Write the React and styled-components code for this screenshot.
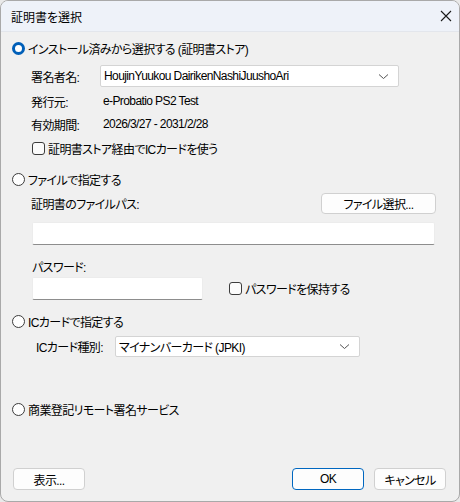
import React from 'react';
// styles
import styled, { createGlobalStyle } from 'styled-components';

const GlobalStyle = createGlobalStyle`
    html, body {
        margin: 0;
        padding: 0;
        background: #e9e9e9;
    }
    * {
        box-sizing: border-box;
    }
`;

const Radio = ({ checked, children }) => (
    <StyledOption>
        <StyledRadio checked={checked} />
        <span>{children}</span>
    </StyledOption>
);

const Check = ({ children }) => (
    <StyledOption>
        <StyledCheckbox />
        <span>{children}</span>
    </StyledOption>
);

const Combo = ({ value, width }) => (
    <StyledCombo style={{ width }}>
        <span>{value}</span>
        <svg width="11" height="7" viewBox="0 0 11 7">
            <path d="M1 1.5 L5.5 5.5 L10 1.5" fill="none" stroke="#555" strokeWidth="1" />
        </svg>
    </StyledCombo>
);

const App = () => {
    return (
        <>
            <GlobalStyle />
            <StyledWindow>
                <StyledTitleBar>
                    <span>証明書を選択</span>
                    <svg width="12" height="12" viewBox="0 0 12 12">
                        <path d="M1 1 L11 11 M11 1 L1 11" stroke="#1a1a1a" strokeWidth="1.1" />
                    </svg>
                </StyledTitleBar>
                <StyledBody>
                    <StyledRow top={8}>
                        <Radio checked>インストール済みから選択する (証明書ストア)</Radio>
                    </StyledRow>
                    <StyledRow top={9} indent={19} height={22}>
                        <StyledLabel width={69}>署名者名:</StyledLabel>
                        <Combo value="HoujinYuukou DairikenNashiJuushoAri" width={299} />
                    </StyledRow>
                    <StyledRow top={6} indent={19}>
                        <StyledLabel width={72}>発行元:</StyledLabel>
                        <span>e-Probatio PS2 Test</span>
                    </StyledRow>
                    <StyledRow top={7} indent={19}>
                        <StyledLabel width={72}>有効期間:</StyledLabel>
                        <span>2026/3/27 - 2031/2/28</span>
                    </StyledRow>
                    <StyledRow top={8} indent={20}>
                        <Check>証明書ストア経由でICカードを使う</Check>
                    </StyledRow>

                    <StyledRow top={15}>
                        <Radio>ファイルで指定する</Radio>
                    </StyledRow>
                    <StyledRow top={6} indent={19} height={21}>
                        <StyledLabel>証明書のファイルパス:</StyledLabel>
                        <StyledButton width={115} push>ファイル選択...</StyledButton>
                    </StyledRow>
                    <StyledRow top={8} indent={20} height={23}>
                        <StyledField width={403} />
                    </StyledRow>
                    <StyledRow top={13} indent={20}>
                        <StyledLabel>パスワード:</StyledLabel>
                    </StyledRow>
                    <StyledRow top={3} indent={20} height={23}>
                        <StyledField width={171} />
                        <StyledGap width={26} />
                        <Check>パスワードを保持する</Check>
                    </StyledRow>

                    <StyledRow top={13}>
                        <Radio>ICカードで指定する</Radio>
                    </StyledRow>
                    <StyledRow top={7} indent={24} height={21}>
                        <StyledLabel width={79}>ICカード種別:</StyledLabel>
                        <Combo value="マイナンバーカード (JPKI)" width={245} />
                    </StyledRow>

                    <StyledRow top={44}>
                        <Radio>商業登記リモート署名サービス</Radio>
                    </StyledRow>

                    <StyledFooter>
                        <StyledButton width={72}>表示...</StyledButton>
                        <StyledFooterRight>
                            <StyledButton width={72} primary>OK</StyledButton>
                            <StyledButton width={72}>キャンセル</StyledButton>
                        </StyledFooterRight>
                    </StyledFooter>
                </StyledBody>
            </StyledWindow>
        </>
    );
}

const StyledWindow = styled.div`
    width: 460px;
    height: 502px;
    display: flex;
    flex-direction: column;
    border: 1px solid #a9a9a9;
    border-radius: 8px;
    overflow: hidden;
    background: #f0f0f0;
    color: #000;
    font-family: "Liberation Sans", "Noto Sans CJK JP", sans-serif;
    font-size: 12px;
    letter-spacing: -0.6px;
    font-feature-settings: "palt";
`;

const StyledTitleBar = styled.div`
    height: 31px;
    flex: none;
    display: flex;
    align-items: center;
    justify-content: space-between;
    padding: 0 7px 0 10px;
    background: #eef2f9;
    border-bottom: 1px solid #e3e6ec;
    letter-spacing: 0;
`;

const StyledBody = styled.div`
    flex: 1;
    display: flex;
    flex-direction: column;
    padding: 0 23px 11px 11px;
`;

const StyledRow = styled.div`
    display: flex;
    align-items: center;
    height: ${props => props.height || 16}px;
    margin-top: ${props => props.top}px;
    padding-left: ${props => props.indent || 0}px;
    white-space: nowrap;
`;

const StyledLabel = styled.span`
    flex: none;
    width: ${props => props.width ? `${props.width}px` : 'auto'};
`;

const StyledGap = styled.span`
    flex: none;
    width: ${props => props.width}px;
`;

const StyledOption = styled.span`
    display: flex;
    align-items: center;
    gap: 3px;
`;

const StyledRadio = styled.span`
    width: 13px;
    height: 13px;
    flex: none;
    border-radius: 50%;
    border: ${props => props.checked ? '3.5px solid #005fb8' : '1px solid #3c3c3c'};
    background: #fff;
`;

const StyledCheckbox = styled.span`
    width: 13px;
    height: 13px;
    flex: none;
    border-radius: 3px;
    border: 1px solid #3c3c3c;
    background: #fbfbfb;
`;

const StyledCombo = styled.div`
    height: 100%;
    display: flex;
    align-items: center;
    justify-content: space-between;
    padding: 0 9px 0 3px;
    background: #fff;
    border: 1px solid #d4d4d4;
    border-radius: 2px;
`;

const StyledField = styled.div`
    height: 100%;
    width: ${props => props.width}px;
    flex: none;
    background: #fff;
    border: 1px solid #ececec;
    border-bottom: 1px solid #8d8d8d;
    border-radius: 2px;
`;

const StyledButton = styled.div`
    width: ${props => props.width}px;
    height: 100%;
    flex: none;
    display: flex;
    align-items: center;
    justify-content: center;
    margin-left: ${props => props.push ? 'auto' : '0'};
    background: #fdfdfd;
    border: 1px solid ${props => props.primary ? '#0067c0' : '#d0d0d0'};
    border-radius: 4px;
`;

const StyledFooter = styled.div`
    margin-top: auto;
    margin-right: -10px;
    height: 22px;
    display: flex;
    justify-content: space-between;
    padding-left: 1px;
`;

const StyledFooterRight = styled.div`
    display: flex;
    gap: 10px;
`;

export default App;
